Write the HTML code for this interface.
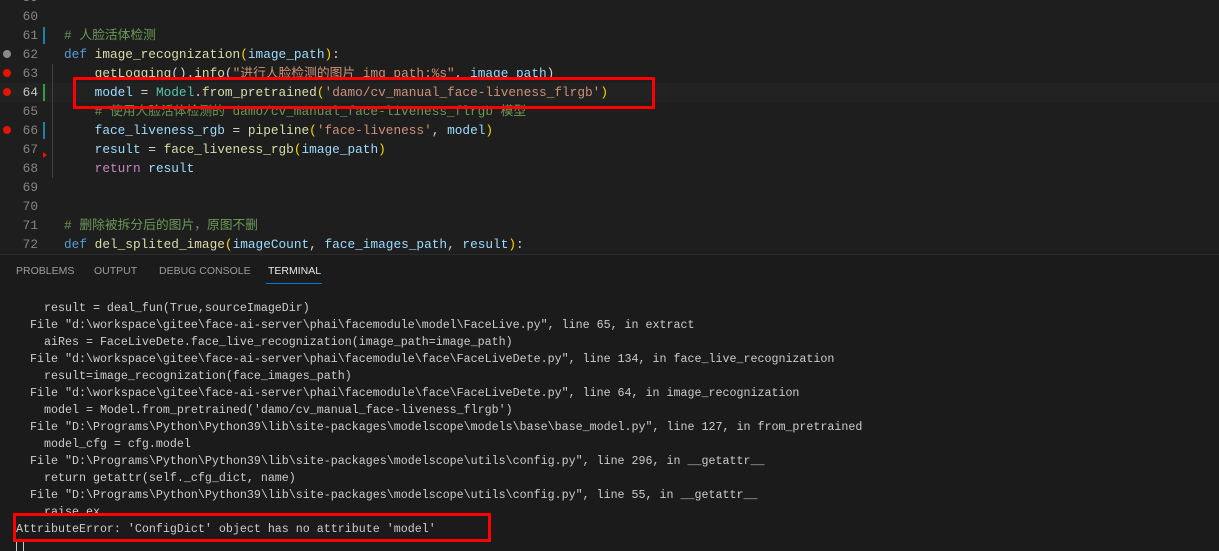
<!DOCTYPE html><html><head><meta charset="utf-8"><style>
body{margin:0;width:1219px;height:550px;overflow:hidden;background:#1e1e1e;font-family:"Liberation Mono","Noto Sans CJK SC",monospace;position:relative}
.ed{position:absolute;left:0;top:0;width:1219px;height:253px;background:#1e1e1e}
.l{position:absolute;left:0;height:19px;line-height:19px;font-size:12.78px;white-space:pre;width:1219px}
.n{position:absolute;left:0;width:38px;text-align:right;color:#858585}
.c{position:absolute;left:64px;color:#d4d4d4}
.cm{color:#6a9955}.kw{color:#569cd6}.fn{color:#dcdcaa}.pa{color:#9cdcfe}.st{color:#ce9178}.cl{color:#4ec9b0}.rt{color:#c586c0}.y{color:#ffd700}
.bp{position:absolute;left:3px;width:8px;height:8px;border-radius:50%;background:#e51400}
.term{position:absolute;left:0;top:254px;width:1219px;height:296px;background:#1b1b1b;border-top:1px solid #2b2b2b}
.tab{position:absolute;top:10px;font-family:"Liberation Sans","Noto Sans CJK SC",sans-serif;font-size:10.5px;color:#9d9d9d}
.t{position:absolute;left:16px;font-size:11.67px;height:17px;line-height:17px;color:#cccccc;white-space:pre}
.box{position:absolute;border:3px solid #f00}
</style></head><body>
<div class="ed">
<div class="l" style="top:-12px"><span class="n">59</span></div>
<div class="l" style="top:7px"><span class="n">60</span></div>
<div class="l" style="top:26px"><span class="n">61</span><span class="c cm"># 人脸活体检测</span></div>
<div class="l" style="top:45px"><span class="n">62</span><span class="c"><span class="kw">def</span> <span class="fn">image_recognization</span><span class="y">(</span><span class="pa">image_path</span><span class="y">)</span>:</span></div>
<div class="l" style="top:64px"><span class="n">63</span><span class="c">    <span class="fn">getLogging</span>().<span class="fn">info</span>(<span class="st">"进行人脸检测的图片 img_path:%s"</span>, <span class="pa">image_path</span>)</span></div>
<div class="l" style="top:83px;background:#222;"><span class="n" style="color:#c6c6c6">64</span><span class="c">    <span class="pa">model</span> = <span class="cl">Model</span>.<span class="fn">from_pretrained</span><span class="y">(</span><span class="st">'damo/cv_manual_face-liveness_flrgb'</span><span class="y">)</span></span></div>
<div class="l" style="top:102px"><span class="n">65</span><span class="c cm">    # 使用人脸活体检测的 damo/cv_manual_face-liveness_flrgb 模型</span></div>
<div class="l" style="top:121px"><span class="n">66</span><span class="c">    <span class="pa">face_liveness_rgb</span> = <span class="fn">pipeline</span><span class="y">(</span><span class="st">'face-liveness'</span>, <span class="pa">model</span><span class="y">)</span></span></div>
<div class="l" style="top:140px"><span class="n">67</span><span class="c">    <span class="pa">result</span> = <span class="fn">face_liveness_rgb</span><span class="y">(</span><span class="pa">image_path</span><span class="y">)</span></span></div>
<div class="l" style="top:159px"><span class="n">68</span><span class="c">    <span class="rt">return</span> <span class="pa">result</span></span></div>
<div class="l" style="top:178px"><span class="n">69</span></div>
<div class="l" style="top:197px"><span class="n">70</span></div>
<div class="l" style="top:216px"><span class="n">71</span><span class="c cm"># 删除被拆分后的图片，原图不删</span></div>
<div class="l" style="top:235px"><span class="n">72</span><span class="c"><span class="kw">def</span> <span class="fn">del_splited_image</span><span class="y">(</span><span class="pa">imageCount</span>, <span class="pa">face_images_path</span>, <span class="pa">result</span><span class="y">)</span>:</span></div>
<div style="position:absolute;left:52px;top:64px;width:1px;height:114px;background:#404040"></div>
<div style="position:absolute;left:43px;top:27px;width:2px;height:17px;background:#1b81a8"></div>
<div style="position:absolute;left:43px;top:84px;width:2px;height:17px;background:#2ea043"></div>
<div style="position:absolute;left:43px;top:122px;width:2px;height:17px;background:#1b81a8"></div>
<div style="position:absolute;left:43px;top:152px;width:0;height:0;border-left:4px solid #e51400;border-top:3px solid transparent;border-bottom:3px solid transparent"></div>
<div class="bp" style="top:50px;background:#8a8a8a"></div>
<div class="bp" style="top:69px"></div>
<div class="bp" style="top:88px"></div>
<div class="bp" style="top:126px"></div>
</div>
<div class="box" style="left:73px;top:77px;width:576px;height:26px"></div>
<div class="term">
<span class="tab" style="left:16px">PROBLEMS</span>
<span class="tab" style="left:94px">OUTPUT</span>
<span class="tab" style="left:159px">DEBUG CONSOLE</span>
<span class="tab" style="left:268px;color:#e7e7e7">TERMINAL</span>
<div style="position:absolute;left:266px;top:28px;width:56px;height:1px;background:#0078d4"></div>
</div>
<div class="t" style="top:300px">    result = deal_fun(True,sourceImageDir)</div>
<div class="t" style="top:317px">  File "d:\workspace\gitee\face-ai-server\phai\facemodule\model\FaceLive.py", line 65, in extract</div>
<div class="t" style="top:334px">    aiRes = FaceLiveDete.face_live_recognization(image_path=image_path)</div>
<div class="t" style="top:351px">  File "d:\workspace\gitee\face-ai-server\phai\facemodule\face\FaceLiveDete.py", line 134, in face_live_recognization</div>
<div class="t" style="top:368px">    result=image_recognization(face_images_path)</div>
<div class="t" style="top:385px">  File "d:\workspace\gitee\face-ai-server\phai\facemodule\face\FaceLiveDete.py", line 64, in image_recognization</div>
<div class="t" style="top:402px">    model = Model.from_pretrained('damo/cv_manual_face-liveness_flrgb')</div>
<div class="t" style="top:419px">  File "D:\Programs\Python\Python39\lib\site-packages\modelscope\models\base\base_model.py", line 127, in from_pretrained</div>
<div class="t" style="top:436px">    model_cfg = cfg.model</div>
<div class="t" style="top:453px">  File "D:\Programs\Python\Python39\lib\site-packages\modelscope\utils\config.py", line 296, in __getattr__</div>
<div class="t" style="top:470px">    return getattr(self._cfg_dict, name)</div>
<div class="t" style="top:487px">  File "D:\Programs\Python\Python39\lib\site-packages\modelscope\utils\config.py", line 55, in __getattr__</div>
<div class="t" style="top:504px">    raise ex</div>
<div class="t" style="top:521px">AttributeError: 'ConfigDict' object has no attribute 'model'</div>
<div style="position:absolute;left:16px;top:540px;width:6px;height:10px;border:1px solid #ccc;border-bottom:none"></div>
<div class="box" style="left:13px;top:513px;width:472px;height:23px"></div>
</body></html>
